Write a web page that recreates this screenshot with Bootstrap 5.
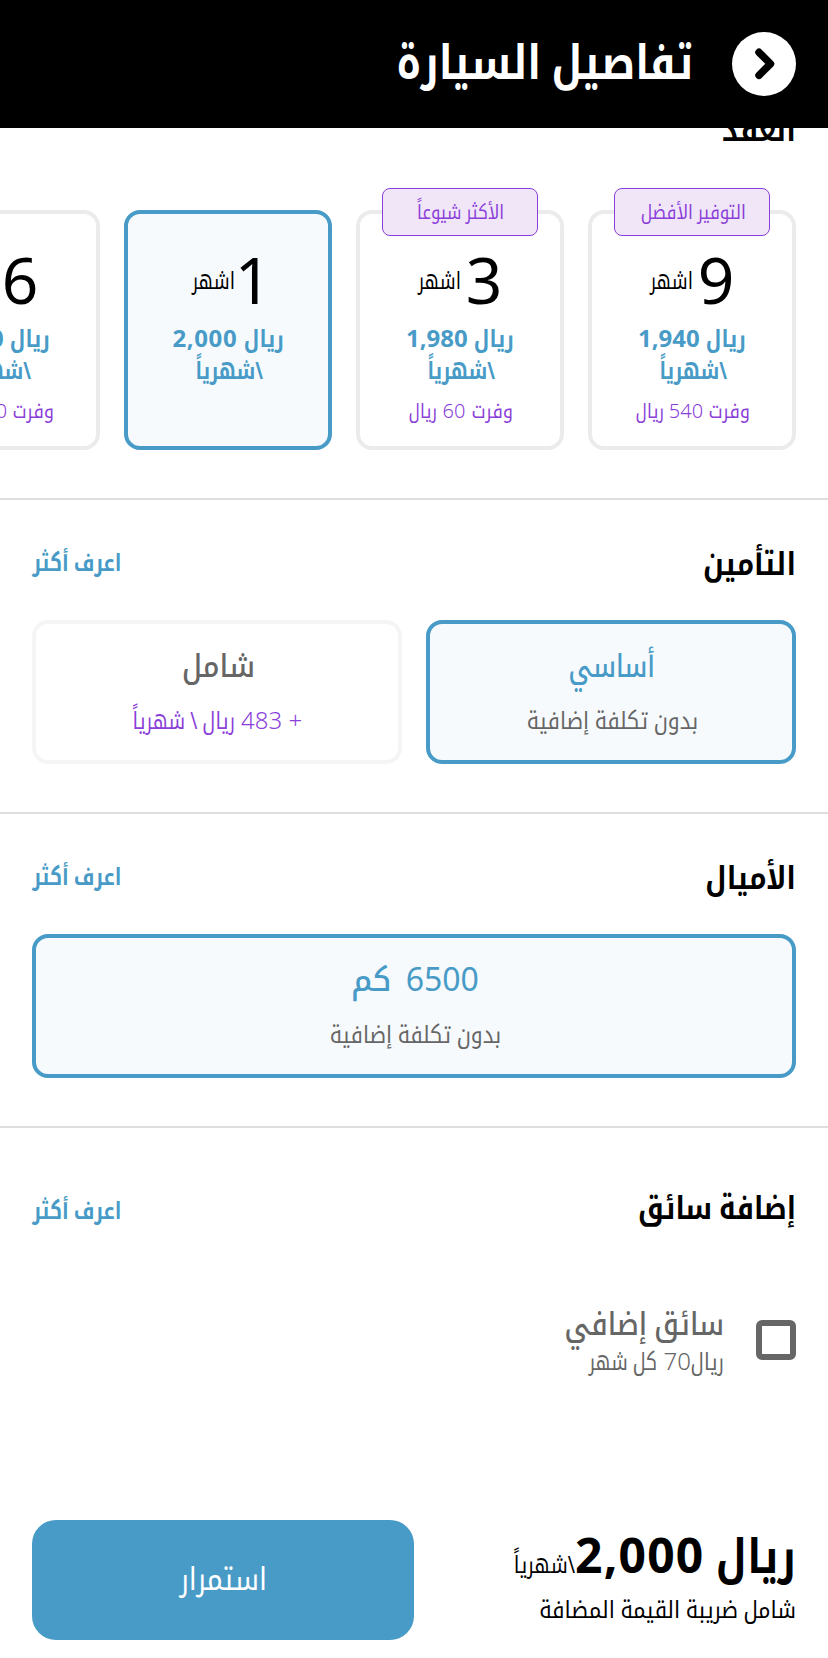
<!DOCTYPE html>
<html lang="ar" dir="rtl">
<head>
<meta charset="utf-8">
<meta name="viewport" content="width=device-width, initial-scale=1">
<title>تفاصيل السيارة</title>
<link href="https://cdn.jsdelivr.net/npm/bootstrap@5.3.0/dist/css/bootstrap.min.css" rel="stylesheet">
<style>
:root{--blue:#489bc7;--tint:#f6fafd;--purple:#8b3fd9;--gray:#666}
body{font-family:"Noto Sans","Noto Kufi Arabic","DejaVu Sans",sans-serif;font-weight:300;background:#fff;color:#000;overflow:hidden;font-size:24px;line-height:32px;height:1658px}
/* condensed kufi lettering: --s is the width factor, --w the resulting advance */
.k{display:inline-block;white-space:nowrap;width:var(--w);transform:scaleX(var(--s));transform-origin:right center}
.k-title{--w:298px;--s:.829}.k-contract{--w:75px;--s:.87}.k-saving{--w:107px;--s:.846}.k-common{--w:88px;--s:.835}
.k-months{--w:43px;--s:.765}.k-sar-b{--w:40px;--s:.844}.k-permonth{--w:70px;--s:.78}.k-saved{--w:42px;--s:.91}
.k-sar-s{--w:30px;--s:.84}.k-more{--w:89.5px;--s:.805}.k-ins{--w:94px;--s:.855}.k-basic{--w:88px;--s:.78}
.k-nocost{--w:173px;--s:.878}.k-full{--w:75px;--s:.885}.k-monthly{--w:103px;--s:.8}.k-miles{--w:92px;--s:.865}
.k-driver{--w:157px;--s:.836}.k-extra{--w:160px;--s:.85}.k-each{--w:68px;--s:.795}.k-sar-r{--w:33px;--s:.82}
.k-sar-xl{--w:79px;--s:.84}.k-slash{--w:62px;--s:.82}.k-vat{--w:257px;--s:.888}.k-go{--w:87px;--s:.87}.k-km{--w:43px;--s:.97;margin-right:-3px}
.top-bar{height:128px;padding:0 32px;gap:39px;z-index:2}
.top-bar h1{font-size:48px;line-height:64px;margin:0 0 7px}
.back-btn{width:64px;height:64px}
.sec{padding:43px 32px 48px;border-bottom:2px solid #dedede}
.sec-contract{padding-top:0}
.sec-contract h2{margin:-19px 0 61px}
.sec h2,.sec-driver h2{font-size:32px;line-height:40px}
.sec-head{margin-bottom:37px}
.more{color:var(--blue);line-height:38px;height:40px}
.plans{gap:24px}
.plan,.opt{border:4px solid #ebebeb;border-radius:16px;background:#fff}
.plan{width:208px;height:240px;padding-top:34px}
.opt{height:144px;padding-top:21px;border-color:#f5f5f5;color:var(--gray)}
.plan.active,.opt.active{border-color:var(--blue);background:var(--tint)}
.tag{top:-26px;left:22px;width:156px;height:48px;line-height:46px;font-size:20px;border:1px solid var(--purple);border-radius:8px;background:#f0e6f8;color:var(--purple)}
.num{font-size:64px;line-height:64px;font-weight:400}
.num-one{margin:0 -7px 0 -5px}
.term{gap:5px;height:64px}
.rate{color:var(--blue);margin-top:10px}
.wide-num{letter-spacing:.6px}
.save-note{font-size:20px;line-height:28px;margin-top:11px;color:var(--purple)}
.opts{gap:24px}
.opt-name{font-size:32px;line-height:40px;font-weight:400;margin-bottom:19px}
.opt-name .k,.driver-name{font-weight:500}
.opt.active .opt-name{color:var(--blue)}
.purple{color:var(--purple)}
.sec-driver{padding:59px 32px 0}
.sec-driver .more{line-height:46px}
.driver-row{margin-top:75px;gap:32px;color:var(--gray)}
.driver-text{padding-top:2px}
.tick{width:40px;height:40px;margin:0;border:6px solid var(--gray);border-radius:6px;background:#fff}
.driver-name{font-size:32px;line-height:38px}
.driver-fee{line-height:38px;height:36px}
.pay-bar{margin-top:142px;padding:0 32px}
.total{padding-top:10px}
.total-sum{height:50px;line-height:50px;margin-bottom:13px}
.total-sum b{font-size:48px;font-weight:700}
.total-sum .wide-num{letter-spacing:1.2px}
.go-btn{width:382px;height:120px;border:0;border-radius:24px;background:var(--blue);color:#fff;font-size:32px;padding:0 0 4px}
</style>
</head>
<body>
<header class="top-bar bg-black text-white d-flex align-items-center position-relative">
  <svg class="back-btn flex-shrink-0" viewBox="0 0 64 64"><circle cx="32" cy="32" r="32" fill="#fff"/><path d="M27 20.3 38.5 31.8 27 43.3" fill="none" stroke="#000" stroke-width="7.5" stroke-linecap="round" stroke-linejoin="round"/></svg>
  <h1 class="fw-bold"><span class="k k-title">تفاصيل السيارة</span></h1>
</header>
<main>
  <section class="sec sec-contract overflow-hidden">
    <h2 class="fw-bold"><span class="k k-contract">العقد</span></h2>
    <div class="plans d-flex text-center">
      <div class="plan position-relative flex-shrink-0">
        <div class="tag position-absolute fw-normal"><span class="k k-saving">التوفير الأفضل</span></div>
        <div class="term d-flex justify-content-center align-items-center"><span class="num">9</span><span class="k k-months fw-normal">اشهر</span></div>
        <div class="rate fw-bold"><div><span class="k k-sar-b">ريال</span> 1,940</div><div><span class="k k-permonth">\شهرياً</span></div></div>
        <div class="save-note"><span class="k k-saved fw-normal">وفرت</span> 540 <span class="k k-sar-s fw-normal">ريال</span></div>
      </div>
      <div class="plan position-relative flex-shrink-0">
        <div class="tag position-absolute fw-normal"><span class="k k-common">الأكثر شيوعاً</span></div>
        <div class="term d-flex justify-content-center align-items-center"><span class="num">3</span><span class="k k-months fw-normal">اشهر</span></div>
        <div class="rate fw-bold"><div><span class="k k-sar-b">ريال</span> 1,980</div><div><span class="k k-permonth">\شهرياً</span></div></div>
        <div class="save-note"><span class="k k-saved fw-normal">وفرت</span> 60 <span class="k k-sar-s fw-normal">ريال</span></div>
      </div>
      <div class="plan active flex-shrink-0">
        <div class="term d-flex justify-content-center align-items-center"><span class="num num-one">1</span><span class="k k-months fw-normal">اشهر</span></div>
        <div class="rate fw-bold"><div><span class="k k-sar-b">ريال</span> <span class="wide-num">2,000</span></div><div><span class="k k-permonth">\شهرياً</span></div></div>
      </div>
      <div class="plan flex-shrink-0">
        <div class="term d-flex justify-content-center align-items-center"><span class="num">6</span><span class="k k-months fw-normal">اشهر</span></div>
        <div class="rate fw-bold"><div><span class="k k-sar-b">ريال</span> 1,960</div><div><span class="k k-permonth">\شهرياً</span></div></div>
        <div class="save-note"><span class="k k-saved fw-normal">وفرت</span> 240 <span class="k k-sar-s fw-normal">ريال</span></div>
      </div>
    </div>
  </section>
  <section class="sec">
    <div class="sec-head d-flex justify-content-between"><h2 class="fw-bold mb-0"><span class="k k-ins">التأمين</span></h2><a class="more fw-bold text-decoration-none"><span class="k k-more">اعرف أكثر</span></a></div>
    <div class="opts d-flex text-center">
      <div class="opt active flex-fill w-50"><div class="opt-name"><span class="k k-basic">أساسي</span></div><div><span class="k k-nocost fw-normal">بدون تكلفة إضافية</span></div></div>
      <div class="opt flex-fill w-50"><div class="opt-name"><span class="k k-full">شامل</span></div><div class="purple">+ 483 <span class="k k-monthly fw-normal">ريال \ شهرياً</span></div></div>
    </div>
  </section>
  <section class="sec">
    <div class="sec-head d-flex justify-content-between"><h2 class="fw-bold mb-0"><span class="k k-miles">الأميال</span></h2><a class="more fw-bold text-decoration-none"><span class="k k-more">اعرف أكثر</span></a></div>
    <div class="opt active text-center"><div class="opt-name">6500&nbsp; <span class="k k-km">كم</span></div><div><span class="k k-nocost fw-normal">بدون تكلفة إضافية</span></div></div>
  </section>
  <section class="sec-driver">
    <div class="d-flex justify-content-between"><h2 class="fw-bold mb-0"><span class="k k-driver">إضافة سائق</span></h2><a class="more fw-bold text-decoration-none"><span class="k k-more">اعرف أكثر</span></a></div>
    <label class="driver-row d-flex align-items-center"><input class="tick form-check-input" type="checkbox">
      <span class="driver-text"><span class="driver-name d-block"><span class="k k-extra">سائق إضافي</span></span><span class="driver-fee d-block"><span class="k k-sar-r fw-normal">ريال</span>70 <span class="k k-each fw-normal">كل شهر</span></span></span>
    </label>
  </section>
</main>
<footer class="pay-bar d-flex justify-content-between">
  <div class="total"><div class="total-sum"><b><span class="k k-sar-xl">ريال</span> <span class="wide-num">2,000</span></b><span class="k k-slash fw-normal">\شهرياً</span></div><div><span class="k k-vat fw-normal">شامل ضريبة القيمة المضافة</span></div></div>
  <button class="go-btn btn"><span class="k k-go">استمرار</span></button>
</footer>
<script src="https://cdn.jsdelivr.net/npm/bootstrap@5.3.0/dist/js/bootstrap.bundle.min.js"></script>
</body>
</html>
